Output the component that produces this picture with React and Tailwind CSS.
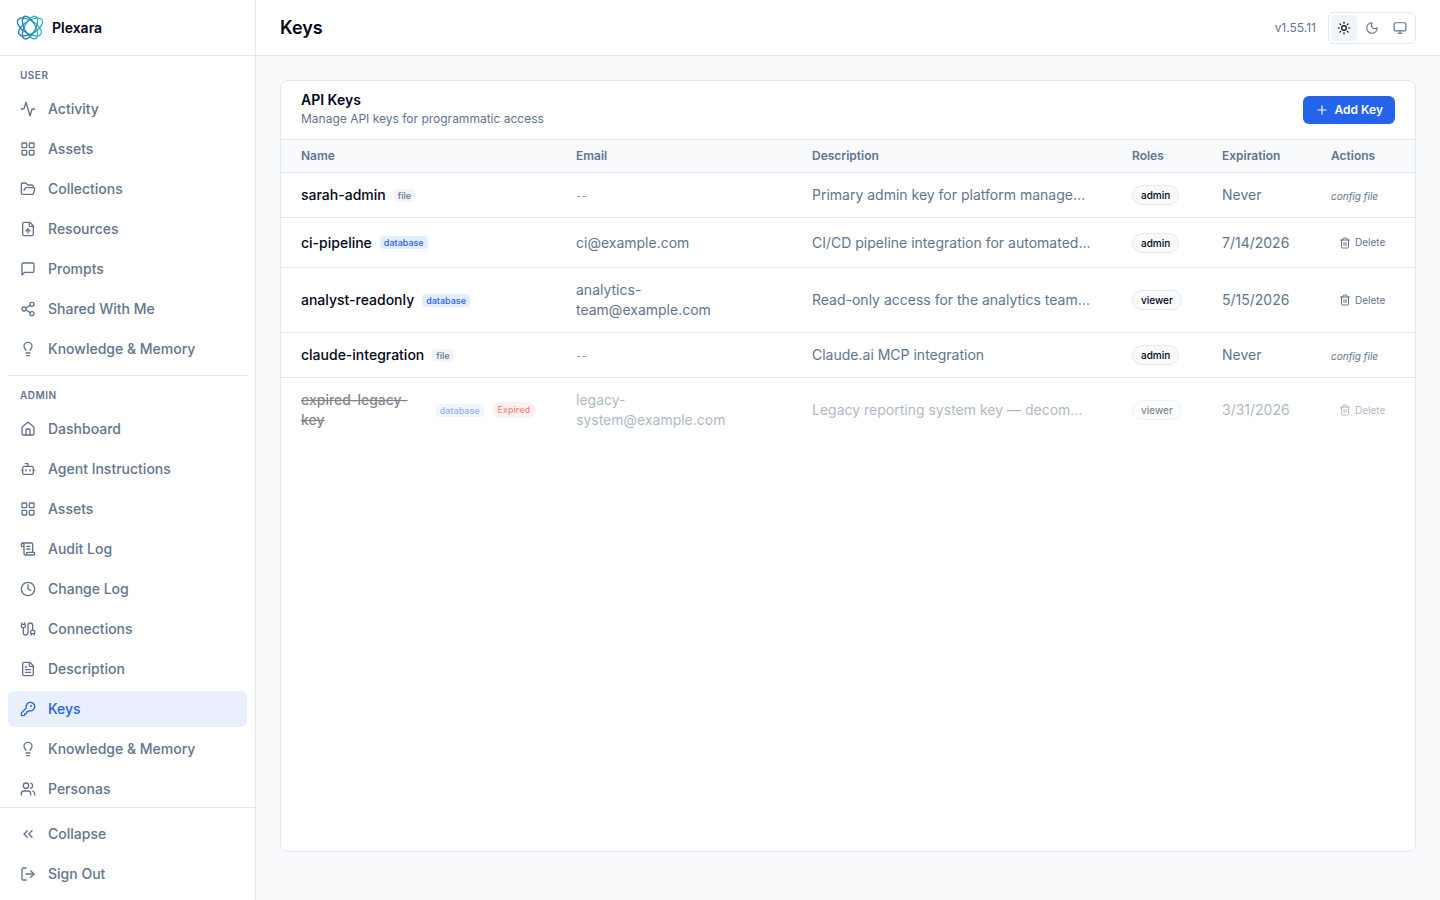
import { useState } from "react";
import {
  Activity,
  Bot,
  Cable,
  ChevronsLeft,
  Clock,
  FileText,
  FileUp,
  FolderOpen,
  House,
  KeyRound,
  LayoutGrid,
  Lightbulb,
  LogOut,
  Monitor,
  Moon,
  Plus,
  ScrollText,
  Share2,
  Sun,
  Trash2,
  Users,
} from "lucide-react";

const userNav = [
  { id: "activity", label: "Activity", icon: Activity },
  { id: "assets", label: "Assets", icon: LayoutGrid },
  { id: "collections", label: "Collections", icon: FolderOpen },
  { id: "resources", label: "Resources", icon: FileUp },
  { id: "prompts", label: "Prompts", icon: SpeechBubble },
  { id: "shared", label: "Shared With Me", icon: Share2 },
  { id: "knowledge", label: "Knowledge & Memory", icon: Lightbulb },
];

const adminNav = [
  { id: "admin-dashboard", label: "Dashboard", icon: House },
  { id: "admin-agents", label: "Agent Instructions", icon: Bot },
  { id: "admin-assets", label: "Assets", icon: LayoutGrid },
  { id: "admin-audit", label: "Audit Log", icon: ScrollText },
  { id: "admin-changes", label: "Change Log", icon: Clock },
  { id: "admin-connections", label: "Connections", icon: Cable },
  { id: "admin-description", label: "Description", icon: FileText },
  { id: "admin-keys", label: "Keys", icon: KeyRound },
  { id: "admin-knowledge", label: "Knowledge & Memory", icon: Lightbulb },
  { id: "admin-personas", label: "Personas", icon: Users },
];

const apiKeys = [
  {
    name: "sarah-admin",
    source: "file",
    description: "Primary admin key for platform management",
    role: "admin",
    expiration: "Never",
  },
  {
    name: "ci-pipeline",
    source: "database",
    email: "ci@example.com",
    description: "CI/CD pipeline integration for automated tests",
    role: "admin",
    expiration: "7/14/2026",
  },
  {
    name: "analyst-readonly",
    source: "database",
    email: "analytics-team@example.com",
    description: "Read-only access for the analytics team only",
    role: "viewer",
    expiration: "5/15/2026",
  },
  {
    name: "claude-integration",
    source: "file",
    description: "Claude.ai MCP integration",
    role: "admin",
    expiration: "Never",
  },
  {
    name: "expired-legacy-key",
    source: "database",
    email: "legacy-system@example.com",
    description: "Legacy reporting system key — decommissioned",
    role: "viewer",
    expiration: "3/31/2026",
    expired: true,
  },
];

const themes = [
  { id: "light", label: "Light theme", icon: Sun },
  { id: "dark", label: "Dark theme", icon: Moon },
  { id: "system", label: "System theme", icon: Monitor },
];

function SpeechBubble({ className }) {
  return (
    <svg
      viewBox="0 0 24 24"
      className={className}
      fill="none"
      stroke="currentColor"
      strokeWidth="2"
      strokeLinecap="round"
      strokeLinejoin="round"
      aria-hidden="true"
    >
      <path d="M21 15a2 2 0 0 1-2 2H7l-4 4V5a2 2 0 0 1 2-2h14a2 2 0 0 1 2 2z" />
    </svg>
  );
}

function Logo() {
  return (
    <svg viewBox="0 0 28 28" className="size-7 shrink-0" fill="none" aria-hidden="true">
      <defs>
        <linearGradient id="logo" x1="4" y1="22" x2="25" y2="6" gradientUnits="userSpaceOnUse">
          <stop stopColor="#1f6fb8" />
          <stop offset="0.5" stopColor="#2193b8" />
          <stop offset="1" stopColor="#34c9b4" />
        </linearGradient>
      </defs>
      <g stroke="url(#logo)" strokeWidth="1.3">
        <ellipse cx="13.4" cy="13" rx="13.5" ry="6.5" transform="rotate(32 13.4 13)" />
        <ellipse cx="14.6" cy="13" rx="13.5" ry="6.5" transform="rotate(-32 14.6 13)" />
        <ellipse cx="14" cy="13.6" rx="12.5" ry="5.5" transform="rotate(-62 14 13.6)" />
        <ellipse cx="14" cy="13.6" rx="12.5" ry="5.5" transform="rotate(62 14 13.6)" />
      </g>
    </svg>
  );
}

function NavItem({ item, active, onClick }) {
  const Icon = item.icon;
  return (
    <button
      type="button"
      onClick={onClick}
      className={`flex w-full shrink-0 items-center gap-3 rounded-md px-3 py-2 text-sm font-medium ${
        active ? "bg-[#e9effd] text-[#2563eb]" : "text-slate-500 hover:bg-slate-100"
      }`}
    >
      <Icon className="size-4 shrink-0" />
      <span>{item.label}</span>
    </button>
  );
}

function NavLabel({ children }) {
  return (
    <p className="px-3 py-1 text-[10px] leading-[15px] font-semibold tracking-wider text-slate-500 uppercase">
      {children}
    </p>
  );
}

function Sidebar({ page, onSelect }) {
  return (
    <aside className="flex w-64 shrink-0 flex-col border-r border-slate-200 bg-white">
      <div className="flex h-14 shrink-0 items-center gap-2 border-b border-slate-200 px-4">
        <Logo />
        <span className="text-sm font-semibold">Plexara</span>
      </div>

      <nav className="flex min-h-0 flex-1 flex-col gap-1 overflow-y-auto p-2 [scrollbar-width:none]">
        <NavLabel>User</NavLabel>
        {userNav.map((item) => (
          <NavItem key={item.id} item={item} active={page === item.id} onClick={() => onSelect(item.id)} />
        ))}
        <hr className="my-1 border-slate-200" />
        <NavLabel>Admin</NavLabel>
        {adminNav.map((item) => (
          <NavItem key={item.id} item={item} active={page === item.id} onClick={() => onSelect(item.id)} />
        ))}
      </nav>

      <div className="flex flex-col gap-1 border-t border-slate-200 p-2">
        <NavItem item={{ label: "Collapse", icon: ChevronsLeft }} />
        <NavItem item={{ label: "Sign Out", icon: LogOut }} />
      </div>
    </aside>
  );
}

function Header({ theme, onTheme }) {
  return (
    <header className="flex h-14 shrink-0 items-center justify-between border-b border-slate-200 bg-white px-6">
      <h1 className="text-lg font-semibold">Keys</h1>
      <div className="flex items-center gap-3">
        <span className="text-xs text-slate-500">v1.55.11</span>
        <div className="flex gap-0.5 rounded-md border border-slate-200 p-0.5">
          {themes.map(({ id, label, icon: Icon }) => (
            <button
              key={id}
              type="button"
              aria-label={label}
              onClick={() => onTheme(id)}
              className={`rounded p-1.5 ${theme === id ? "bg-slate-100 text-slate-950" : "text-slate-500"}`}
            >
              <Icon className="size-3.5" />
            </button>
          ))}
        </div>
      </div>
    </header>
  );
}

function SourceTag({ source }) {
  return (
    <span
      className={`rounded px-1 text-[9px] leading-[13px] font-medium ${
        source === "file" ? "bg-slate-100 text-slate-500" : "bg-[#e3edfe] text-[#2563eb]"
      }`}
    >
      {source}
    </span>
  );
}

function KeyRow({ apiKey }) {
  return (
    <tr className={`border-b border-slate-200 last:border-0 ${apiKey.expired ? "opacity-50" : ""}`}>
      <td className="px-5 py-3">
        <div className="flex items-center gap-2">
          <span className={`font-medium ${apiKey.expired ? "line-through" : ""}`}>{apiKey.name}</span>
          <SourceTag source={apiKey.source} />
          {apiKey.expired && (
            <span className="rounded-full bg-red-100 px-1.5 py-0.5 text-[9px] leading-3 font-medium text-red-600">
              Expired
            </span>
          )}
        </div>
      </td>
      <td className="px-5 py-3 text-slate-500">
        {apiKey.email || <span className="text-xs text-slate-400">--</span>}
      </td>
      <td className="px-5 py-3 text-slate-500">
        <p className="truncate">{apiKey.description}</p>
      </td>
      <td className="px-5">
        <div className="flex">
          <span className="rounded-full border border-slate-200 bg-slate-50 px-2 text-[10px] leading-[18px] font-medium">
            {apiKey.role}
          </span>
        </div>
      </td>
      <td className="px-5 py-3 text-slate-500">{apiKey.expiration}</td>
      <td className="px-5 py-3 text-slate-500">
        {apiKey.source === "file" ? (
          <span className="text-[10px] italic">config file</span>
        ) : (
          <button type="button" className="flex h-[25px] items-center gap-1 rounded px-2 text-[10px]">
            <Trash2 className="size-3" />
            Delete
          </button>
        )}
      </td>
    </tr>
  );
}

export default function App() {
  const [page, setPage] = useState("admin-keys");
  const [theme, setTheme] = useState("light");

  return (
    <div className="flex h-screen bg-slate-50 font-[Inter,sans-serif] text-slate-950">
      <Sidebar page={page} onSelect={setPage} />

      <div className="flex min-w-0 flex-1 flex-col">
        <Header theme={theme} onTheme={setTheme} />

        <main className="flex min-h-0 flex-1 flex-col px-6 pt-6 pb-12">
          <section className="flex min-h-0 flex-1 flex-col overflow-hidden rounded-lg border border-slate-200 bg-white">
            <div className="flex items-center justify-between border-b border-slate-200 px-5 py-3">
              <div>
                <h2 className="text-sm leading-[14px] font-semibold">API Keys</h2>
                <p className="mt-1 text-xs text-slate-500">Manage API keys for programmatic access</p>
              </div>
              <button
                type="button"
                className="flex h-7 items-center gap-1.5 rounded-md bg-[#2563eb] px-3 text-xs font-semibold text-white hover:bg-blue-700"
              >
                <Plus className="size-3.5" />
                Add Key
              </button>
            </div>

            <div className="min-h-0 flex-1 overflow-auto">
              <table className="w-full table-fixed text-sm">
                <colgroup>
                  <col />
                  <col className="w-[236px]" />
                  <col className="w-[320px]" />
                  <col className="w-[90px]" />
                  <col className="w-[109px]" />
                  <col className="w-[104px]" />
                </colgroup>
                <thead>
                  <tr className="border-b border-slate-200 bg-slate-50 text-left text-xs text-slate-500">
                    <th className="px-5 py-2 font-semibold">Name</th>
                    <th className="px-5 py-2 font-semibold">Email</th>
                    <th className="px-5 py-2 font-semibold">Description</th>
                    <th className="px-5 py-2 font-semibold">Roles</th>
                    <th className="px-5 py-2 font-semibold">Expiration</th>
                    <th className="px-5 py-2 font-semibold">Actions</th>
                  </tr>
                </thead>
                <tbody>
                  {apiKeys.map((apiKey) => (
                    <KeyRow key={apiKey.name} apiKey={apiKey} />
                  ))}
                </tbody>
              </table>
            </div>
          </section>
        </main>
      </div>
    </div>
  );
}
